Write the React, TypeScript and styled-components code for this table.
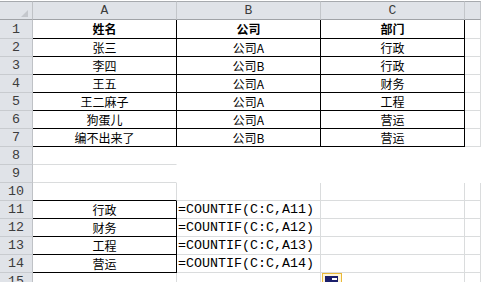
import React from "react";
import styled, { createGlobalStyle } from "styled-components";

const GlobalStyle = createGlobalStyle`
  html, body { margin: 0; padding: 0; background: #ffffff; overflow: hidden; }
  #root { width: 481px; height: 282px; overflow: hidden; }
`;

type Line = "grid" | "black" | "none";

const lineColor = (l: Line) =>
  l === "black" ? "#000000" : l === "grid" ? "#dadcdd" : "transparent";

const Sheet = styled.div`
  position: relative;
  width: 481px;
  height: 282px;
  padding-top: 1px;
  box-sizing: border-box;
  display: grid;
  grid-template-columns: 33px 144px 144px 144px 1fr;
  grid-auto-rows: 18px;
  grid-template-rows: 19px 19px;
  overflow: hidden;
  font-family: "Noto Sans CJK SC", "Liberation Sans", sans-serif;
`;

const Corner = styled.div`
  background: #e0e3e8;
  border-top: 1px solid #a7aaae;
  border-bottom: 1px solid #a0a3a7;
  border-right: 1px solid #bfc2c6;
  box-sizing: border-box;
  display: flex;
  align-items: flex-end;
  justify-content: flex-end;
  padding: 0 4px 2px 0;
`;

const CornerTriangle = styled.div`
  width: 0;
  height: 0;
  border-left: 7px solid transparent;
  border-bottom: 7px solid #c4c7cc;
`;

const ColHead = styled.div`
  background: #e0e3e8;
  border-top: 1px solid #a7aaae;
  border-bottom: 1px solid #a0a3a7;
  border-right: 1px solid #c3c6ca;
  box-sizing: border-box;
  display: flex;
  align-items: center;
  justify-content: center;
  font-family: "Liberation Mono", monospace;
  font-size: 13px;
  color: #3c3c3c;
`;

const RowHead = styled.div`
  background: #e0e3e8;
  border-right: 1px solid #bfc2c6;
  border-bottom: 1px solid #c8cbcf;
  box-sizing: border-box;
  display: flex;
  align-items: center;
  justify-content: center;
  font-family: "Liberation Mono", monospace;
  font-size: 13.33px;
  color: #3c3c3c;
`;

const Cell = styled.div<{
  $right: Line;
  $bottom: Line;
  $bold?: boolean;
  $mono?: boolean;
  $left?: boolean;
}>`
  box-sizing: border-box;
  border-right: 1px solid ${(p) => lineColor(p.$right)};
  border-bottom: 1px solid ${(p) => lineColor(p.$bottom)};
  display: flex;
  align-items: center;
  justify-content: ${(p) => (p.$left ? "flex-start" : "center")};
  padding-left: ${(p) => (p.$left ? "1px" : "0")};
  white-space: nowrap;
  overflow: visible;
  font-family: ${(p) =>
    p.$mono
      ? `"Liberation Mono", "Noto Sans CJK SC", monospace`
      : `"Noto Sans CJK SC", "Liberation Sans", sans-serif`};
  font-size: ${(p) => (p.$mono ? "13.33px" : "12px")};
  font-weight: ${(p) => (p.$bold ? 700 : 400)};
  color: #000000;
  line-height: 1;
`;

/* Auto-fill options button floating over the grid */
const FillOptions = styled.div`
  position: absolute;
  left: 322px;
  top: 273px;
  width: 20px;
  height: 16px;
  box-sizing: border-box;
  border: 1px solid #e9b93a;
  background: #fff6d9;
  padding: 2px 0 0 2px;
  display: flex;
  align-items: flex-start;
`;

const FillBlock = styled.div`
  width: 13px;
  height: 8px;
  background: #1b1f6b;
  box-sizing: border-box;
  padding: 2px 1px 0 0;
  display: flex;
  justify-content: flex-end;
  align-items: flex-start;
`;

const FillMark = styled.div`
  width: 5px;
  height: 2px;
  background: #ffffff;
`;

type CellDef = {
  text?: string;
  right: Line;
  bottom: Line;
  bold?: boolean;
  mono?: boolean;
  left?: boolean;
};

const people = [
  ["张三", "公司A", "行政"],
  ["李四", "公司B", "行政"],
  ["王五", "公司A", "财务"],
  ["王二麻子", "公司A", "工程"],
  ["狗蛋儿", "公司A", "营运"],
  ["编不出来了", "公司B", "营运"],
];

const depts = ["行政", "财务", "工程", "营运"];

const buildRows = (): CellDef[][] => {
  const rows: CellDef[][] = [];
  rows.push([
    { text: "姓名", right: "black", bottom: "black", bold: true },
    { text: "公司", right: "black", bottom: "black", bold: true },
    { text: "部门", right: "black", bottom: "black", bold: true },
    { right: "grid", bottom: "grid" },
  ]);
  people.forEach((p) => {
    rows.push([
      { text: p[0], right: "black", bottom: "black" },
      { text: p[1], right: "black", bottom: "black" },
      { text: p[2], right: "black", bottom: "black" },
      { right: "grid", bottom: "grid" },
    ]);
  });
  for (let i = 0; i < 2; i++) {
    rows.push([
      { right: "none", bottom: "grid" },
      { right: "none", bottom: "none" },
      { right: "none", bottom: "none" },
      { right: "none", bottom: "none" },
    ]);
  }
  rows.push([
    { right: "grid", bottom: "black" },
    { right: "grid", bottom: "grid" },
    { right: "grid", bottom: "grid" },
    { right: "grid", bottom: "grid" },
  ]);
  depts.forEach((d, i) => {
    rows.push([
      { text: d, right: "black", bottom: "black" },
      {
        text: `=COUNTIF(C:C,A${11 + i})`,
        right: "grid",
        bottom: "grid",
        mono: true,
        left: true,
      },
      { right: "grid", bottom: "grid" },
      { right: "grid", bottom: "grid" },
    ]);
  });
  rows.push([
    { right: "grid", bottom: "grid" },
    { right: "grid", bottom: "grid" },
    { right: "grid", bottom: "grid" },
    { right: "grid", bottom: "grid" },
  ]);
  return rows;
};

export default function App() {
  const rows = buildRows();
  return (
    <>
      <GlobalStyle />
      <Sheet>
        <Corner>
          <CornerTriangle />
        </Corner>
        {["A", "B", "C", ""].map((c, i) => (
          <ColHead key={i}>{c}</ColHead>
        ))}
        {rows.map((r, ri) => (
          <React.Fragment key={ri}>
            <RowHead>{ri + 1}</RowHead>
            {r.map((c, ci) => (
              <Cell
                key={ci}
                $right={c.right}
                $bottom={c.bottom}
                $bold={c.bold}
                $mono={c.mono}
                $left={c.left}
              >
                {c.text}
              </Cell>
            ))}
          </React.Fragment>
        ))}
        <FillOptions>
          <FillBlock>
            <FillMark />
          </FillBlock>
        </FillOptions>
      </Sheet>
    </>
  );
}
